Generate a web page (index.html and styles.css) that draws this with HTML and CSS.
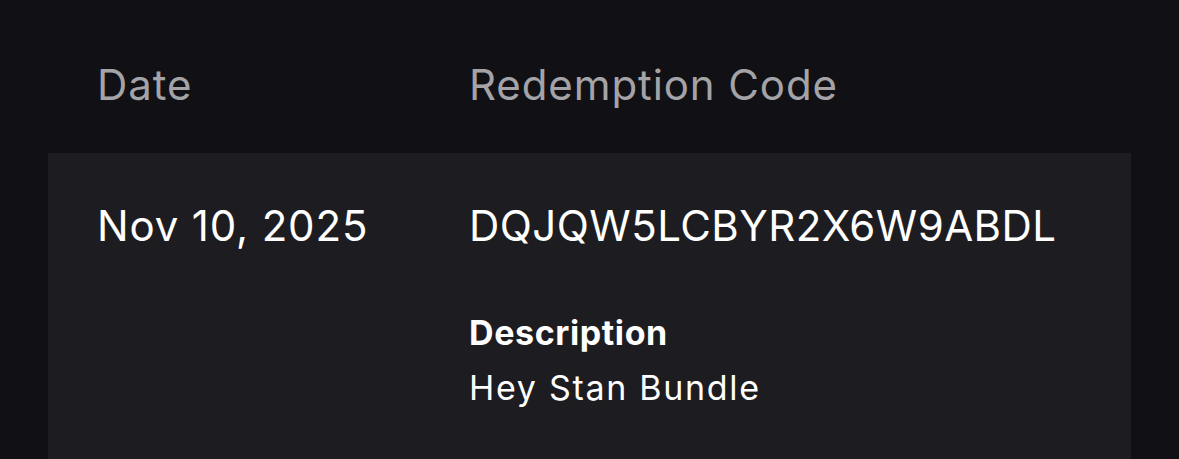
FILE: index.html
```html
<!DOCTYPE html>
<html>
<head>
<meta charset="utf-8">
<link rel="stylesheet" href="styles.css">
</head>
<body>
<div class="page">
  <div class="table-head">
    <div class="col-date">Date</div>
    <div class="col-code">Redemption Code</div>
  </div>
  <div class="row">
    <div class="col-date cell date-cell">Nov 10, 2025</div>
    <div class="col-code">
      <div class="cell">DQJQW5LCBYR2X6W9ABDL</div>
      <div class="desc">
        <div class="desc-label">Description</div>
        <div class="desc-text">Hey Stan Bundle</div>
      </div>
    </div>
  </div>
</div>
</body>
</html>
```
FILE: styles.css
```css
html, body {
  margin: 0;
  padding: 0;
  background: #111115;
  height: 100%;
  overflow: hidden;
}
body {
  font-family: Inter, "Noto Sans", sans-serif;
  color: #ffffff;
}
.page {
  padding: 59px 48px 0 48px;
}
.table-head {
  display: flex;
  padding-left: 49px;
  font-size: 42px;
  line-height: 52px;
  color: #a3a3a8;
  letter-spacing: 0.9px;
}
.col-date {
  width: 372px;
  flex: none;
}
.col-code {
  flex: 1;
}
.row {
  margin-top: 42px;
  background: #1d1d21;
  display: flex;
  padding: 47px 0 60px 49px;
  min-height: 400px;
}
.cell {
  font-size: 42px;
  line-height: 52px;
  letter-spacing: 0.45px;
}
.date-cell {
  letter-spacing: 0.85px;
}
.desc {
  margin-top: 58px;
}
.desc-label {
  font-size: 34px;
  font-weight: 700;
  line-height: 46px;
  letter-spacing: 0.6px;
}
.desc-text {
  margin-top: 5px;
  font-size: 34px;
  line-height: 54px;
  letter-spacing: 1.7px;
}
```
